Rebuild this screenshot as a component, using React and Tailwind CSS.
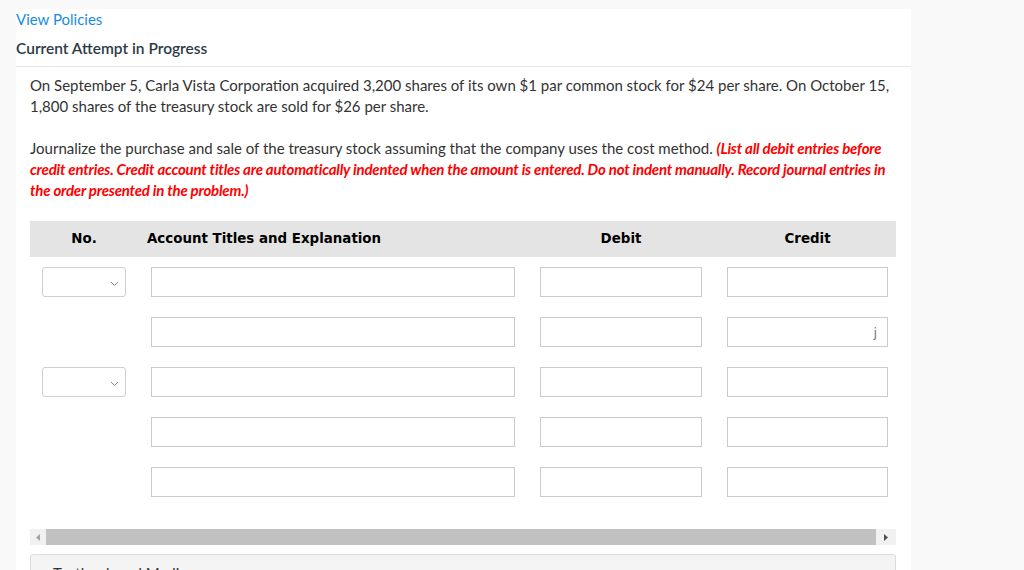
import React from "react";

function Chevron() {
  return (
    <svg width="9" height="6" viewBox="0 0 9 6" className="absolute right-[6px] top-[13px]">
      <path d="M1 1 L4.5 4.5 L8 1" fill="none" stroke="#888" strokeWidth="1" />
    </svg>
  );
}

function Select() {
  return (
    <div className="relative h-[30px] w-[84px] rounded-[3px] border border-[#cfcfcf] bg-white">
      <Chevron />
    </div>
  );
}

function Input({ w, children }) {
  return (
    <div
      className={`flex h-[30px] items-center justify-end border border-[#cbcbcb] bg-white pr-[10px] ${w}`}
    >
      {children}
    </div>
  );
}

function Row({ select, mark }) {
  return (
    <div className="flex h-[50px] items-center pl-[12px]">
      <div className="w-[84px] shrink-0">{select ? <Select /> : null}</div>
      <div className="ml-[25px]">
        <Input w="w-[364px]" />
      </div>
      <div className="ml-[25px]">
        <Input w="w-[162px]" />
      </div>
      <div className="ml-[25px]">
        <Input w="w-[161px]">
          {mark ? (
            <span className="text-[13px] leading-none text-[#777]" style={{ fontFamily: "'DejaVu Sans', sans-serif" }}>
              j
            </span>
          ) : null}
        </Input>
      </div>
    </div>
  );
}

export default function App() {
  const lato = { fontFamily: "Lato, 'Open Sans', sans-serif" };
  const verdana = { fontFamily: "'DejaVu Sans', Verdana, sans-serif" };
  return (
    <div className="h-[570px] w-[1024px] overflow-hidden bg-[#f9f9f9] pt-[9px]" style={lato}>
      <div className="ml-[16px] w-[895px] bg-white">
        <div className="h-[20px] text-[15px] leading-[20px] text-[#1a8ce0]">View Policies</div>
        <div className="mt-[9px] text-[15.5px] leading-[20px] font-semibold text-[#2d3b45]">
          Current Attempt in Progress
        </div>
        <div className="mt-[8px] h-px bg-[#e6e6e6]" />
        <div className="px-[14px] pt-[8px]">
          <p className="w-[862px] text-[15px] leading-[21px] text-[#333]">
            On September 5, Carla Vista Corporation acquired 3,200 shares of its own $1 par common stock for $24 per share. On October 15,
            1,800 shares of the treasury stock are sold for $26 per share.
          </p>
          <p className="mt-[21px] w-[862px] text-[15px] leading-[21px] text-[#333]">
            Journalize the purchase and sale of the treasury stock assuming that the company uses the cost method.{" "}
            <span className="font-bold italic tracking-[-0.2px] text-[#ff0000]">
              (List all debit entries before credit entries. Credit account titles are automatically indented when the amount is entered. Do not indent manually. Record journal entries in the order presented in the problem.)
            </span>
          </p>

          <div className="mt-[20px] w-[866px]">
            <div className="flex h-[36px] items-center bg-[#e4e4e4] pl-[12px] pt-px text-[13.4px] font-bold text-black" style={verdana}>
              <div className="w-[84px] text-center">No.</div>
              <div className="ml-[21px] w-[368px]">Account Titles and Explanation</div>
              <div className="ml-[25px] w-[162px] text-center">Debit</div>
              <div className="ml-[25px] w-[161px] text-center">Credit</div>
            </div>
            <Row select />
            <Row mark />
            <Row select />
            <Row />
            <Row />
          </div>

          <div className="mt-[22px] flex h-[16px] w-[866px] items-stretch bg-[#f1f1f1]">
            <div className="flex w-[16px] items-center justify-center">
              <svg width="4" height="7" viewBox="0 0 4 7">
                <path d="M4 0 L0 3.5 L4 7 Z" fill="#a3a3a3" />
              </svg>
            </div>
            <div className="flex-1 bg-[#c1c1c1]" />
            <div className="flex w-[20px] items-center justify-center">
              <svg width="4" height="7" viewBox="0 0 4 7">
                <path d="M0 0 L4 3.5 L0 7 Z" fill="#505050" />
              </svg>
            </div>
          </div>

          <div className="mt-[9px] h-[40px] w-[866px] rounded-t-[3px] border border-[#dcdcdc] bg-[#f4f4f4] pl-[22px] pt-[8px] text-[15px] leading-[20px] text-[#333]">
            Textbook and Media
          </div>
        </div>
      </div>
    </div>
  );
}
